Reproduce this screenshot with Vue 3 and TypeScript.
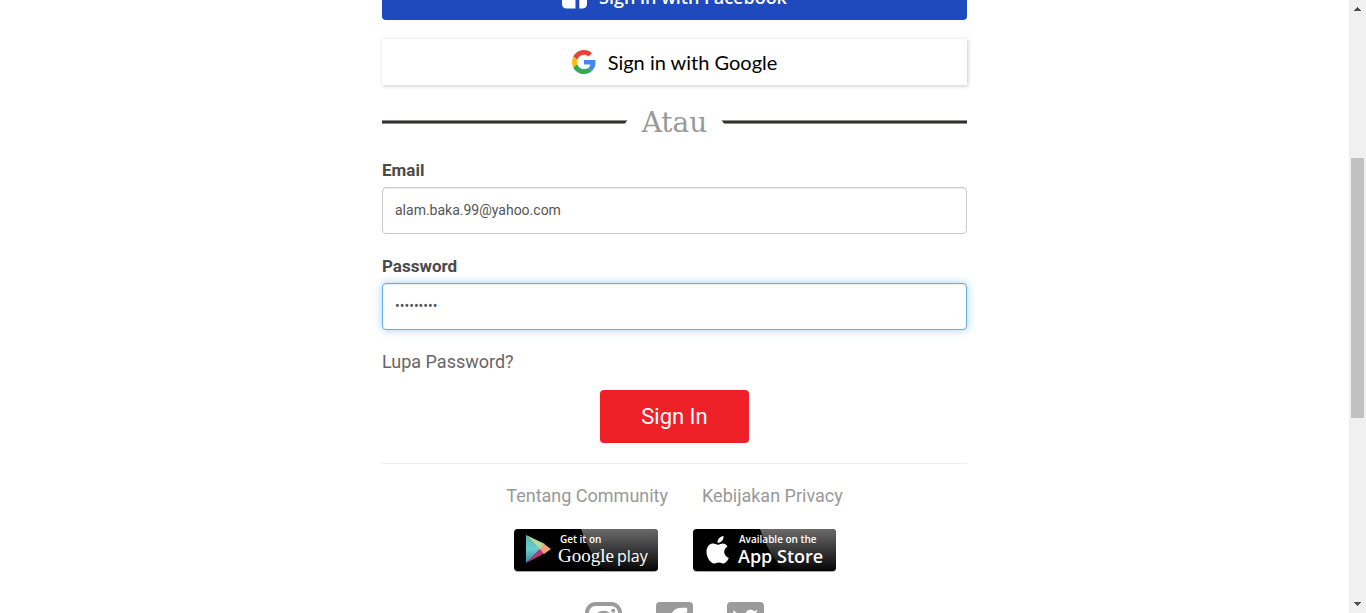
<script setup lang="ts">
import { ref } from 'vue'

const email = ref('alam.baka.99@yahoo.com')
const password = ref('abcdefghi')
</script>

<template>
  <div class="screen">
    <main class="page">
      <form class="login" @submit.prevent>
        <button type="button" class="social facebook">
          <svg width="25" height="26" viewBox="0 0 26 26" aria-hidden="true">
            <path fill="#fff" d="M5 0H21Q26 0 26 5V21Q26 26 21 26H18V16H21.500L22 12H18V9.500Q18 8 20 8H22V4.300H18.500Q14 4.300 14 9V12H11V16H14V26H5Q0 26 0 21V5Q0 0 5 0Z" />
          </svg>
          <span>Sign in with Facebook</span>
        </button>
        <button type="button" class="social google">
          <svg width="24" height="24" viewBox="0 0 48 48" aria-hidden="true">
            <path fill="#ea4335" d="M24 9.500c3.540 0 6.710 1.220 9.210 3.600l6.850-6.850C35.900 2.380 30.470 0 24 0 14.620 0 6.510 5.380 2.560 13.220l7.980 6.190C12.430 13.720 17.740 9.500 24 9.500z" />
            <path fill="#4285f4" d="M46.980 24.550c0-1.570-.15-3.090-.38-4.550H24v9.020h12.940c-.58 2.960-2.260 5.480-4.780 7.180l7.730 6c4.510-4.180 7.090-10.360 7.090-17.650z" />
            <path fill="#fbbc05" d="M10.530 28.590c-.48-1.450-.76-2.990-.76-4.590s.27-3.140.76-4.590l-7.980-6.190C.92 16.460 0 20.120 0 24s.92 7.540 2.560 10.780l7.970-6.190z" />
            <path fill="#34a853" d="M24 48c6.480 0 11.930-2.130 15.890-5.810l-7.730-6c-2.150 1.450-4.920 2.300-8.160 2.300-6.260 0-11.570-4.220-13.470-9.910l-7.980 6.190C6.510 42.620 14.620 48 24 48z" />
          </svg>
          <span>Sign in with Google</span>
        </button>

        <div class="divider">
          <span class="rule rule-left"></span>
          <span class="word">Atau</span>
          <span class="rule rule-right"></span>
        </div>

        <div class="field">
          <label for="email">Email</label>
          <input id="email" v-model="email" type="email" />
        </div>
        <div class="field">
          <label for="password">Password</label>
          <input id="password" v-model="password" class="active" type="password" />
        </div>

        <a class="forgot" href="#">Lupa Password?</a>
        <button type="submit" class="submit">Sign In</button>
      </form>

      <footer>
        <nav class="links">
          <a href="#">Tentang Community</a>
          <a href="#">Kebijakan Privacy</a>
        </nav>
        <div class="stores">
          <a href="#" class="badge" aria-label="Get it on Google play">
            <svg width="144" height="43" viewBox="0 0 144 43">
              <defs>
                <linearGradient id="gloss" x1="0" y1="0" x2="0" y2="1">
                  <stop offset="0" stop-color="#6a6a6a" />
                  <stop offset="1" stop-color="#050505" />
                </linearGradient>
                <linearGradient id="teal" x1="0" y1="0" x2="0" y2="1">
                  <stop offset="0" stop-color="#55b8b0" />
                  <stop offset="0.500" stop-color="#6bcbd0" />
                  <stop offset="1" stop-color="#368bab" />
                </linearGradient>
              </defs>
              <rect width="144" height="43" rx="4" fill="#a6a6a6" />
              <rect width="144" height="42" rx="4" fill="#000" />
              <path d="M67 0H140Q144 0 144 4V38Q144 42 140 42H91Q76 26 67 0Z" fill="url(#gloss)" />
              <path d="M12 6L31 15L26 21Z" fill="#b5d99a" />
              <path d="M12 34L26 20L31 24Z" fill="#b93878" />
              <path d="M26 20L30 15L37 20L30 25Z" fill="#f3a179" />
              <path d="M12 6L26 20L12 34Z" fill="url(#teal)" />
              <text x="46" y="14" class="small">Get it on</text>
              <text x="44" y="33" class="catull">Google</text>
              <text x="103" y="33" class="play">play</text>
            </svg>
          </a>
          <a href="#" class="badge" aria-label="Available on the App Store">
            <svg width="143" height="43" viewBox="0 0 143 43">
              <rect width="143" height="43" rx="4" fill="#a6a6a6" />
              <rect width="143" height="42" rx="4" fill="#000" />
              <path d="M67 0H139Q143 0 143 4V38Q143 42 139 42H91Q76 26 67 0Z" fill="url(#gloss)" />
              <path fill="#fff" d="M30.500 7C31 10.500 28 14 24.500 13.800C24.300 10.500 27 7.500 30.500 7ZM34.500 17.500C29.500 20.500 30.500 27 35.800 29C34.500 32 32 35 29.500 34.500C27 33.300 25.500 33.200 22.500 34.300C18 36 13 27.500 13.500 22C14 15.500 19 13.300 22.500 15C24.500 16 25.500 16 27.500 15C30 13.800 33 14.700 34.500 17.500Z" />
              <text x="46" y="14" class="small">Available on the</text>
              <text x="45" y="34" class="store">App Store</text>
            </svg>
          </a>
        </div>
        <div class="follow">
          <a href="#" aria-label="Instagram">
            <svg width="37" height="37" viewBox="0 0 38 38">
              <rect x="2" y="2" width="34" height="34" rx="9" fill="none" stroke="#9b9b9b" stroke-width="4" />
              <circle cx="19" cy="19" r="8" fill="none" stroke="#9b9b9b" stroke-width="4" />
              <circle cx="29" cy="9" r="2" fill="#9b9b9b" />
            </svg>
          </a>
          <a href="#" aria-label="Facebook">
            <svg width="37" height="37" viewBox="0 0 38 38">
              <path fill="#9b9b9b" d="M4 0H34Q38 0 38 4V34Q38 38 34 38H26V24H31L32 18H26V14Q26 11 29 11H32V6H27Q15 6 15 18V18H12V24H15V38H4Q0 38 0 34V4Q0 0 4 0Z" />
            </svg>
          </a>
          <a href="#" aria-label="Twitter">
            <svg width="37" height="37" viewBox="0 0 38 38">
              <rect width="38" height="38" rx="4" fill="#9b9b9b" />
              <path fill="#fff" d="M32 11L29 12Q31 10 31.500 8L28 9.500Q25 6.500 21.500 8.500Q18.500 10.500 19 14Q12 14 7 8.500Q5 13 8.500 16L6 15.500Q6.500 19.500 10.500 21H8Q9.500 24.500 13 25Q10 27.500 5.500 27Q14 32 22 28Q29.500 23.500 29 14Z" />
            </svg>
          </a>
        </div>
      </footer>
    </main>

    <div class="scrollbar" aria-hidden="true">
      <svg width="7" height="4" viewBox="0 0 7 4"><path d="M0 4V3H1V2H2V1H3V0H4V1H5V2H6V3H7V4Z" fill="#505050" /></svg>
      <div class="track"><div class="thumb"></div></div>
      <svg width="7" height="4" viewBox="0 0 7 4"><path d="M0 0V1H1V2H2V3H3V4H4V3H5V2H6V1H7V0Z" fill="#505050" /></svg>
    </div>
  </div>
</template>

<style>
body {
  background: #fff;
}
</style>

<style scoped>
.screen {
  display: flex;
  height: 100vh;
  overflow: hidden;
  font-family: Roboto, "Liberation Sans", sans-serif;
}

.screen * {
  box-sizing: border-box;
}

.page {
  flex: 1;
  display: flex;
  flex-direction: column;
  align-items: center;
  /* the page is scrolled part way past the first button */
  margin-top: -26px;
}

.login,
footer {
  width: 100%;
  max-width: 585px;
}

.login {
  display: flex;
  flex-direction: column;
}

a {
  text-decoration: none;
}

button {
  border: 0;
  cursor: pointer;
}

.social {
  display: flex;
  align-items: center;
  justify-content: center;
  gap: 12px;
  height: 46px;
  padding: 0;
  font-size: 20px;
  line-height: 24px;
}

.facebook {
  border-radius: 4px;
  background: #1e4abd;
  color: #fff;
  font-family: "Open Sans", sans-serif;
  font-size: 18px;
  font-weight: 600;
}

.facebook svg {
  margin-top: -2px;
}

.google {
  margin-top: 19px;
  background: #fff;
  box-shadow: 1px 1px 4px rgba(0, 0, 0, 0.22);
  color: #000;
  font-family: Lato, sans-serif;
}

.divider {
  display: flex;
  align-items: center;
  gap: 14px;
  margin-top: 18px;
}

.rule {
  flex: 1;
  height: 4px;
  background: linear-gradient(#8f8c8c 1px, #333030 1px, #333030 3px, #8f8c8c 3px);
}

.rule-left {
  clip-path: polygon(0 0, 100% 0, calc(100% - 3px) 100%, 0 100%);
}

.rule-right {
  clip-path: polygon(0 0, 100% 0, 100% 100%, 3px 100%);
}

.word {
  padding-top: 2px;
  color: #999;
  font-family: "DejaVu Serif", serif;
  font-size: 28px;
  line-height: 36px;
}

.field {
  display: flex;
  flex-direction: column;
  margin-top: 17px;
}

.field + .field {
  margin-top: 20px;
}

.field label {
  color: #4a4a4a;
  font-size: 17px;
  font-weight: 700;
  line-height: 24px;
  margin-bottom: 5px;
}

.field input {
  height: 47px;
  padding: 0 12px 2px;
  border: 1px solid #ccc;
  border-radius: 4px;
  outline: 0;
  background: #fff;
  box-shadow: inset 0 1px 1px rgba(0, 0, 0, 0.075);
  color: #555;
  font-family: Roboto, sans-serif;
  font-size: 14px;
}

.field input.active {
  border-color: #66afe9;
  box-shadow: inset 0 1px 1px rgba(0, 0, 0, 0.075), 0 0 8px rgba(102, 175, 233, 0.6);
}

.forgot {
  align-self: flex-start;
  margin-top: 20px;
  color: #666;
  font-size: 18px;
  line-height: 24px;
}

.submit {
  align-self: center;
  margin-top: 16px;
  padding: 13px 41px;
  border-radius: 4px;
  background: #ee2128;
  color: #fff;
  font-family: Roboto, sans-serif;
  font-size: 22px;
  line-height: 27px;
}

footer {
  margin-top: 20px;
  border-top: 1px solid #eee;
}

.links {
  display: flex;
  justify-content: center;
  gap: 34px;
  margin-top: 20px;
  font-size: 18px;
  line-height: 24px;
}

.links a {
  color: #999;
}

.stores {
  display: flex;
  justify-content: center;
  gap: 35px;
  margin-top: 21px;
}

.badge {
  display: flex;
}

.badge text {
  fill: #fff;
}

.small {
  font-family: "Open Sans", sans-serif;
  font-size: 10px;
  font-weight: 600;
}

.catull {
  font-family: "Liberation Serif", serif;
  font-size: 19px;
}

.play {
  font-family: "Open Sans", sans-serif;
  font-size: 16px;
}

.store {
  font-family: "Open Sans", sans-serif;
  font-size: 18px;
  font-weight: 600;
}

.follow {
  display: flex;
  justify-content: center;
  gap: 34px;
  margin-top: 30px;
}

.scrollbar {
  display: flex;
  flex-direction: column;
  align-items: center;
  width: 17px;
  padding: 7px 0;
  background: #f0f0f0;
}

.track {
  flex: 1;
  width: 13px;
}

.thumb {
  height: 44%;
  margin-top: 147px;
  background: #c1c1c1;
}
</style>
